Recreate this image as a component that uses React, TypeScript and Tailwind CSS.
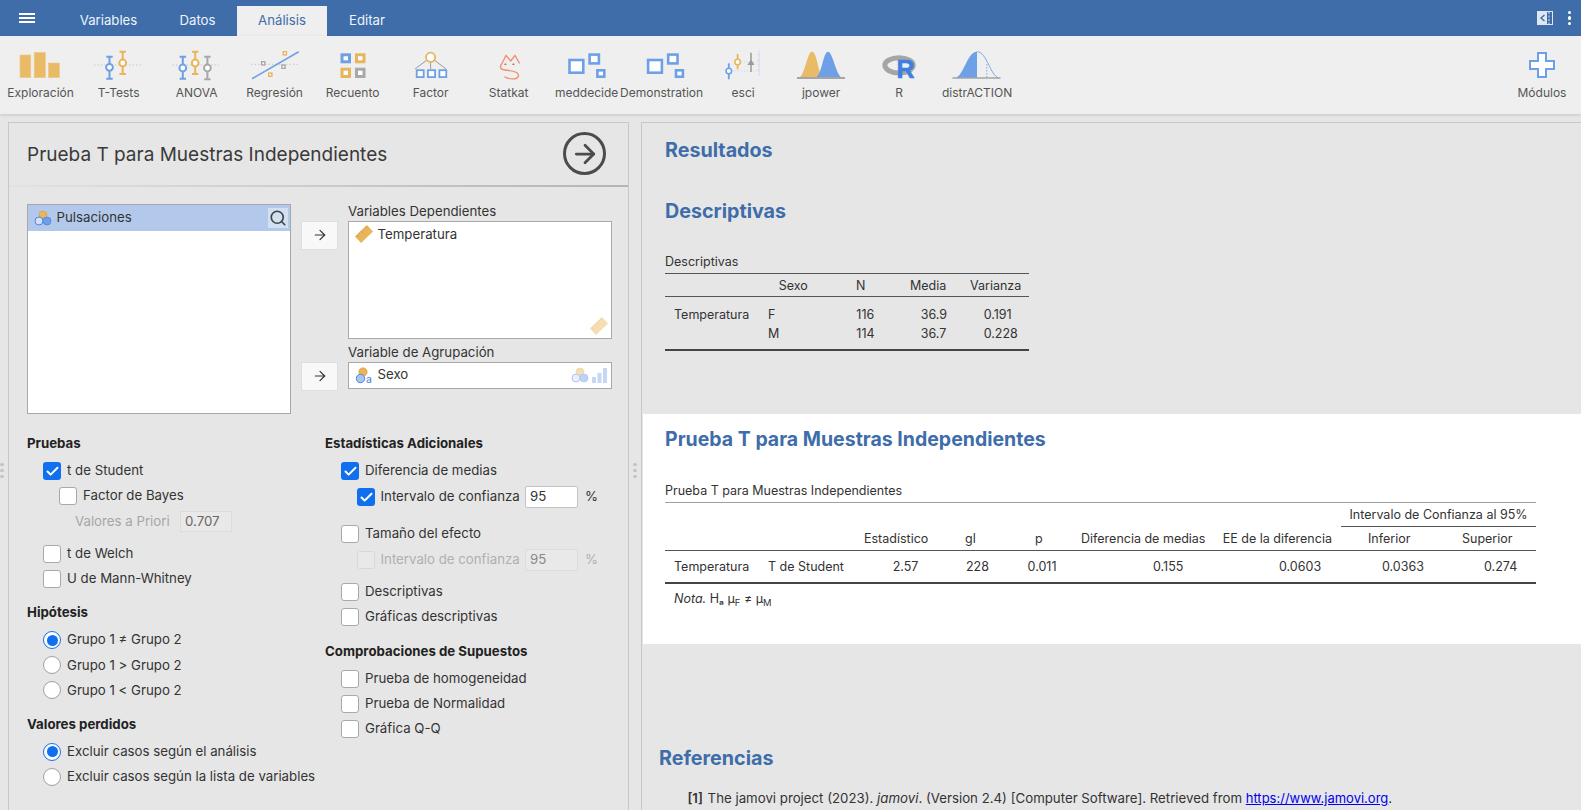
import type { ReactNode } from 'react';
import { ArrowRight, Search, Check } from 'lucide-react';

const BLUE = '#6ea0e8';
const ORANGE = '#e9b45a';
const GRAY = '#a8a8a8';

function ErrBar({ x, y1, y2, cy, color, r = 3.4 }: { x: number; y1: number; y2: number; cy: number; color: string; r?: number }) {
    return (
        <g stroke={color} strokeWidth="2" fill="none">
            <path d={`M${x} ${y1}V${y2}M${x - 3.2} ${y1}h6.4M${x - 3.2} ${y2}h6.4`} />
            <circle cx={x} cy={cy} r={r} fill="#fff" />
        </g>
    );
}

function Box({ x, y, w, h, color, sw = 2.6 }: { x: number; y: number; w: number; h: number; color: string; sw?: number }) {
    return <rect x={x + sw / 2} y={y + sw / 2} width={w - sw} height={h - sw} fill="#fff" stroke={color} strokeWidth={sw} />;
}

function Dotted({ d }: { d: string }) {
    return <path d={d} stroke="#c9c9c9" strokeWidth="1" strokeDasharray="1.5 2" fill="none" />;
}

function BlocksIcon({ dx = 0 }: { dx?: number }) {
    return (
        <>
            <Box x={11.2 + dx} y={11.7} w={16.4} h={15.3} color={BLUE} />
            <Box x={31.3 + dx} y={6.3} w={11.9} h={11.4} color={BLUE} />
            <Box x={39.1 + dx} y={22} w={9.5} h={9} color={BLUE} />
        </>
    );
}

const toolIcons: Record<string, ReactNode> = {
    exploracion: (
        <g fill="#e9bb66" stroke="#efc988" strokeWidth="0.6">
            <rect x="9" y="8" width="10.8" height="22.7" />
            <rect x="23.2" y="5.3" width="11.2" height="25.4" />
            <rect x="37.4" y="16" width="11" height="14.7" />
        </g>
    ),
    ttests: (
        <>
            <Dotted d="M5 18H53" />
            <ErrBar x={20.5} y1={9.7} y2={31.7} cy={20.3} color={BLUE} />
            <ErrBar x={33.7} y1={4.7} y2={27} cy={16} color={ORANGE} />
        </>
    ),
    anova: (
        <>
            <Dotted d="M5.6 18H52" />
            <ErrBar x={15.8} y1={9.7} y2={31.7} cy={21} color={BLUE} />
            <ErrBar x={28.2} y1={4.7} y2={27} cy={16} color={ORANGE} />
            <ErrBar x={40.4} y1={9.7} y2={32.3} cy={21} color={GRAY} />
        </>
    ),
    regresion: (
        <>
            <Dotted d="M6 17.3H54" />
            <path d="M7.1 31.7L53.7 4.7" stroke={BLUE} strokeWidth="1.6" />
            <Box x={16} y={14} w={4.6} h={4.6} color={GRAY} sw={1.4} />
            <Box x={37.5} y={4} w={4.6} h={4.6} color={ORANGE} sw={1.4} />
            <Box x={36.2} y={17.4} w={4.6} h={4.6} color={GRAY} sw={1.4} />
            <Box x={23} y={25.4} w={4.6} h={4.6} color={ORANGE} sw={1.4} />
        </>
    ),
    recuento: (
        <>
            <Box x={17.5} y={6.3} w={10.5} h={10} color={BLUE} sw={3} />
            <Box x={32} y={6.3} w={10.5} h={10} color={ORANGE} sw={3} />
            <Box x={17.5} y={20.7} w={10.5} h={10.3} color={ORANGE} sw={3} />
            <Box x={32} y={20.7} w={10.5} h={10.3} color={GRAY} sw={3} />
        </>
    ),
    factor: (
        <>
            <path d="M29.6 10.3L14 22M29.6 10.3V22M29.6 10.3L45 22" stroke="#9a9a9a" strokeWidth="1" fill="none" />
            <circle cx="29.6" cy="10.3" r="4.6" fill="#fff" stroke={ORANGE} strokeWidth="1.8" />
            <Box x={14.8} y={22.3} w={8.8} h={8.7} color={BLUE} sw={1.8} />
            <Box x={26} y={22.3} w={9} h={8.7} color={BLUE} sw={1.8} />
            <Box x={37.5} y={22.3} w={8.7} h={8.7} color={BLUE} sw={1.8} />
        </>
    ),
    statkat: (
        <g fill="none" stroke="#f28c6b" strokeWidth="1.3" strokeLinecap="round" strokeLinejoin="round">
            <path d="M40.3 16L36 8.3L31.7 14L27 8.3L23 16.5C20 20 21.5 22.5 26 23C30 23.5 34 23.5 37.5 25.5C41 27.5 39.5 31.5 35.5 31.8C32 32 28 31.5 26 30" />
            <path d="M26 17.3h.8M34 17.3h.8" stroke="#d9604f" strokeWidth="1.5" />
        </g>
    ),
    meddecide: <BlocksIcon />,
    demonstration: <BlocksIcon dx={3.6} />,
    esci: (
        <>
            <path d="M46.2 3.7V29M44.8 8h1.4M44.8 13h1.4M44.8 18h1.4M44.8 23h1.4" stroke="#b6cdf0" strokeWidth="0.8" strokeDasharray="1.5 1" fill="none" />
            <path d="M16 24H46M25 15H46" stroke="#c6d8f3" strokeWidth="0.8" strokeDasharray="1.5 1.5" fill="none" />
            <path d="M15.8 16.3V32.3" stroke={BLUE} strokeWidth="1.8" />
            <circle cx="15.8" cy="24" r="2.8" fill="#fff" stroke={BLUE} strokeWidth="1.5" />
            <path d="M24.6 7V22.3" stroke={ORANGE} strokeWidth="1.8" />
            <circle cx="24.6" cy="15" r="2.8" fill="#fff" stroke={ORANGE} strokeWidth="1.5" />
            <path d="M38 5.7V25" stroke={GRAY} strokeWidth="1.8" />
            <path d="M34.4 18L38 12.5L41.6 18Z" fill="#9a9a9a" />
        </>
    ),
    jpower: (
        <>
            <path d="M7 31C14 30 16 4.7 21 4.7C26 4.7 27 26 32 31Z" fill="#e9bb66" />
            <path d="M24 31C31 29 32 4.7 37 4.7C42 4.7 45 30 52 31Z" fill={BLUE} />
            <path d="M6 31H54" stroke="#a5a5a5" strokeWidth="2" />
        </>
    ),
    r: (
        <>
            <ellipse cx="30" cy="18.3" rx="14.2" ry="7.6" fill="none" stroke="#a5a5a5" strokeWidth="5" />
            <text x="27.5" y="31.3" fontSize="25" fontWeight="700" fontFamily="Liberation Sans, sans-serif" fill="#3f7fe0" stroke="#3f7fe0" strokeWidth="0.6">R</text>
        </>
    ),
    distraction: (
        <>
            <path d="M8 31C17 29 20 4.7 30 4.7V31Z" fill={BLUE} />
            <path d="M30 4.7C40 4.7 43 29 52 31" fill="none" stroke={BLUE} strokeWidth="0.9" />
            <path d="M39.8 17V31" stroke={BLUE} strokeWidth="0.9" strokeDasharray="1.5 1.5" />
            <path d="M5.4 31H53.5" stroke="#a5a5a5" strokeWidth="1.6" />
        </>
    ),
};

function ToolItem({ icon, label, className }: { icon: string; label: string; className: string }) {
    return (
        <div className={`flex flex-col items-center ${className}`}>
            <svg width="60" height="36" viewBox="0 0 60 36" className="mt-[11px] shrink-0">{toolIcons[icon]}</svg>
            <span className="mt-[2px] text-[12px] leading-[16px] whitespace-nowrap text-[#555]">{label}</span>
        </div>
    );
}

function NominalIcon({ className = '' }: { className?: string }) {
    return (
        <svg width="18" height="16" viewBox="0 0 18 16" className={className}>
            <circle cx="9" cy="5" r="4" fill={ORANGE} stroke="#d79b3a" strokeWidth="0.6" />
            <circle cx="5" cy="11" r="4" fill="#cfe0fa" stroke="#4f86e0" strokeWidth="1" />
            <circle cx="13" cy="11" r="4" fill={BLUE} stroke="#4f86e0" strokeWidth="0.8" />
        </svg>
    );
}

function RulerIcon({ className = '' }: { className?: string }) {
    return (
        <svg width="18" height="18" viewBox="0 0 18 18" className={className}>
            <path d="M12 0L18 6.5L6 18L0 11.5Z" fill={ORANGE} />
            <path d="M10.4 1.6l1.6 1.7M8.2 3.7l1 1.1M6 5.8l1.6 1.7M3.8 7.9l1 1.1M1.6 10l1.6 1.7" stroke="#b9812a" strokeWidth="0.7" />
        </svg>
    );
}

function NominalTextIcon() {
    return (
        <svg width="18" height="20" viewBox="0 0 18 20" className="-mb-[3px]">
            <circle cx="8" cy="5" r="4.2" fill={ORANGE} stroke="#d79b3a" strokeWidth="0.6" />
            <circle cx="5.5" cy="11.5" r="4.2" fill="#a9c6f2" stroke="#4f86e0" strokeWidth="1" />
            <text x="11" y="16" fontSize="10.5" fontFamily="Inter, sans-serif" fill="#3f7fe0">a</text>
        </svg>
    );
}

function Checkbox({ checked, disabled }: { checked?: boolean; disabled?: boolean }) {
    if (checked) {
        return (
            <span className="flex h-[18px] w-[18px] shrink-0 items-center justify-center rounded-[3px] bg-[#0f6fee]">
                <Check size={15} strokeWidth={3.2} color="#fff" />
            </span>
        );
    }
    return (
        <span className={`h-[18px] w-[18px] shrink-0 rounded-[3px] border ${disabled ? 'border-[#d8d8d8] bg-[#e9e9e9]' : 'border-[#a9a9a9] bg-white'}`} />
    );
}

function Radio({ checked }: { checked?: boolean }) {
    if (checked) {
        return (
            <span className="flex h-[18px] w-[18px] shrink-0 items-center justify-center rounded-full border-[1.5px] border-[#0f6fee] bg-white">
                <span className="h-[11px] w-[11px] rounded-full bg-[#0f6fee]" />
            </span>
        );
    }
    return <span className="h-[18px] w-[18px] shrink-0 rounded-full border border-[#a0a0a0] bg-white" />;
}

function SectionTitle({ children, className }: { children: ReactNode; className: string }) {
    return <div className={`flex h-[18px] items-center font-bold text-[#222] ${className}`}>{children}</div>;
}

function CheckRow({ label, checked, className }: { label: string; checked?: boolean; className: string }) {
    return (
        <div className={`flex h-[18px] items-center gap-[6px] ${className}`}>
            <Checkbox checked={checked} />
            <span>{label}</span>
        </div>
    );
}

function RadioRow({ label, checked, className }: { label: string; checked?: boolean; className: string }) {
    return (
        <div className={`flex h-[18px] items-center gap-[6px] ${className}`}>
            <Radio checked={checked} />
            <span className="whitespace-nowrap">{label}</span>
        </div>
    );
}

function ConfRow({ checked, className }: { checked?: boolean; className: string }) {
    const dim = !checked;
    return (
        <div className={`flex h-[22px] items-center ${className}`}>
            <Checkbox checked={checked} disabled={dim} />
            <span className={`ml-[5.5px] w-[144.5px] whitespace-nowrap ${dim ? 'text-[#b0b0b0]' : ''}`}>Intervalo de confianza</span>
            <span className={`flex h-[22px] w-[52.5px] items-center rounded-[2px] border pl-[4px] ${dim ? 'border-[#dcdcdc] bg-[#e9e9e9] text-[#888]' : 'border-[#c4c4c4] bg-white'}`}>95</span>
            <span className={`ml-[7.5px] ${dim ? 'text-[#b0b0b0]' : ''}`}>%</span>
        </div>
    );
}

function ArrowButton({ className }: { className: string }) {
    return (
        <div className={`flex w-[37px] shrink-0 items-center justify-center border border-[#dedede] bg-[#f8f8f8] ${className}`}>
            <ArrowRight size={16} color="#333" strokeWidth={1.8} />
        </div>
    );
}

function HandleDots() {
    return (
        <div className="mt-[341px] flex flex-col items-center gap-[2.5px]">
            <span className="h-[3.5px] w-[3.5px] rounded-full bg-[#c4c4c4]" />
            <span className="h-[3.5px] w-[3.5px] rounded-full bg-[#c4c4c4]" />
            <span className="h-[3.5px] w-[3.5px] rounded-full bg-[#c4c4c4]" />
        </div>
    );
}

function Heading({ children, className }: { children: ReactNode; className: string }) {
    return <h2 className={`leading-[28px] font-bold text-[#3e6da9] ${className}`}>{children}</h2>;
}

export default function App() {
    return (
        <div className="flex h-[810px] w-[1581px] flex-col overflow-hidden bg-[#e6e6e6] font-[Inter,sans-serif] text-[13.25px] text-[#333]">
            {/* Tabs */}
            <header className="flex h-9 shrink-0 items-end bg-[#3e6da9] text-[13.2px] text-white">
                <div className="flex h-9 w-[59px] items-center pl-[19px]">
                    <svg width="16" height="10" viewBox="0 0 16 10">
                        <path d="M0 1H16M0 5H16M0 9H16" stroke="#fff" strokeWidth="1.8" />
                    </svg>
                </div>
                <div className="flex h-[30.5px] w-[99px] items-center justify-center text-[#f0f4fa]">Variables</div>
                <div className="flex h-[30.5px] w-[79px] items-center justify-center text-[#f0f4fa]">Datos</div>
                <div className="flex h-[30.5px] w-[90px] items-center justify-center bg-[#efefef] text-[#3e6da9]">Análisis</div>
                <div className="flex h-[30.5px] w-[80px] items-center justify-center text-[#f0f4fa]">Editar</div>
                <div className="ml-auto flex h-9 items-center">
                    <svg width="16" height="14" viewBox="0 0 16 14">
                        <rect x="0.5" y="0.5" width="15" height="13" fill="#3e6da9" stroke="#dfe7f2" />
                        <rect x="1" y="1" width="9" height="12" fill="#dfe7f2" />
                        <path d="M7.5 4L4 7L7.5 10" fill="none" stroke="#3e6da9" strokeWidth="1.4" />
                        <path d="M12 1V13" stroke="#dfe7f2" strokeWidth="1" strokeDasharray="2 1.5" />
                    </svg>
                    <div className="ml-[15px] mr-[10px] flex flex-col gap-[2.2px]">
                        <span className="h-[3.4px] w-[3.4px] rounded-full bg-white" />
                        <span className="h-[3.4px] w-[3.4px] rounded-full bg-white" />
                        <span className="h-[3.4px] w-[3.4px] rounded-full bg-white" />
                    </div>
                </div>
            </header>

            {/* Toolbar */}
            <div className="z-10 flex h-[78px] shrink-0 bg-[#efefef] pl-[1.6px] shadow-[0_1px_3px_rgba(0,0,0,0.15)]">
                <ToolItem icon="exploracion" label="Exploración" className="w-[78px]" />
                <ToolItem icon="ttests" label="T-Tests" className="w-[78px]" />
                <ToolItem icon="anova" label="ANOVA" className="w-[78px]" />
                <ToolItem icon="regresion" label="Regresión" className="w-[78px]" />
                <ToolItem icon="recuento" label="Recuento" className="w-[78px]" />
                <ToolItem icon="factor" label="Factor" className="w-[78px]" />
                <ToolItem icon="statkat" label="Statkat" className="w-[78px]" />
                <ToolItem icon="meddecide" label="meddecide" className="w-[78px]" />
                <ToolItem icon="demonstration" label="Demonstration" className="mr-[6.5px] w-[72px]" />
                <ToolItem icon="esci" label="esci" className="w-[78px]" />
                <ToolItem icon="jpower" label="jpower" className="w-[78px]" />
                <ToolItem icon="r" label="R" className="w-[78px]" />
                <ToolItem icon="distraction" label="distrACTION" className="w-[78px]" />
                <div className="ml-auto mr-[9px] flex w-[60px] flex-col items-center">
                    <svg width="26" height="26" viewBox="0 0 26 26" className="mt-[16px] shrink-0">
                        <path d="M9 1H17V9H25V17H17V25H9V17H1V9H9Z" fill="#fff" stroke={BLUE} strokeWidth="2" />
                    </svg>
                    <span className="mt-[7px] text-[12px] leading-[16px] text-[#555]">Módulos</span>
                </div>
            </div>

            {/* Main */}
            <main className="flex min-h-0 flex-1 pt-[7.5px]">
                <div className="w-[8px] shrink-0">
                    <div className="w-[4px]">
                        <HandleDots />
                    </div>
                </div>

                {/* Options panel */}
                <section className="w-[621px] shrink-0 border-x border-t border-[#c8c8c8]">
                    <div className="flex h-[62px] items-center justify-between pl-[18px] pr-[22px]">
                        <h1 className="mt-[2px] text-[19px] leading-[28px] font-normal text-[#3a3a3a]">Prueba T para Muestras Independientes</h1>
                        <div className="flex h-[43px] w-[43px] items-center justify-center rounded-full border-[3px] border-[#4b4b4b]">
                            <ArrowRight size={30} color="#4b4b4b" strokeWidth={2.2} />
                        </div>
                    </div>
                    <div className="h-[2px] bg-linear-to-r from-[#e2e2e2] to-[#b4b4b4]" />

                    <div className="flex pl-[18px] pt-[17px]">
                        <div className="h-[210px] w-[263.5px] shrink-0 border border-[#a8a8a8] bg-white">
                            <div className="flex h-[26px] items-center justify-between bg-[#b3c9ec] pl-[6px] pr-[2px]">
                                <div className="flex items-center gap-[4.5px]">
                                    <NominalIcon />
                                    <span>Pulsaciones</span>
                                </div>
                                <div className="flex h-[20px] w-[20px] items-center justify-center bg-[#d3dff3]">
                                    <Search size={18} color="#444" strokeWidth={2.2} />
                                </div>
                            </div>
                        </div>
                        <div className="ml-[10.5px] flex flex-col">
                            <div className="flex gap-[10px]">
                                <ArrowButton className="mt-[17px] h-[29px]" />
                                <div>
                                    <div className="h-[17px] leading-[15px]">Variables Dependientes</div>
                                    <div className="flex h-[118.5px] w-[263.5px] flex-col justify-between border border-[#a8a8a8] bg-white p-[3px] pl-[6px]">
                                        <div className="flex items-center gap-[4.5px]">
                                            <RulerIcon />
                                            <span>Temperatura</span>
                                        </div>
                                        <RulerIcon className="self-end opacity-45" />
                                    </div>
                                </div>
                            </div>
                            <div className="mt-[3.5px] flex gap-[10px]">
                                <ArrowButton className="mt-[19px] h-[29px]" />
                                <div>
                                    <div className="h-[19px] leading-[18px]">Variable de Agrupación</div>
                                    <div className="flex h-[27.5px] w-[263.5px] items-center justify-between border border-[#a8a8a8] bg-white pl-[6px] pr-[4px]">
                                        <div className="flex items-center gap-[4.5px]">
                                            <NominalTextIcon />
                                            <span>Sexo</span>
                                        </div>
                                        <div className="flex items-center gap-[3px]">
                                            <NominalIcon className="opacity-45" />
                                            <svg width="15" height="16" viewBox="0 0 15 16" className="opacity-40">
                                                <path d="M0 10h4v6H0zM5.5 6h4v10h-4zM11 1h4v15h-4z" fill={BLUE} />
                                            </svg>
                                        </div>
                                    </div>
                                </div>
                            </div>
                        </div>
                    </div>

                    <div className="mt-[21.2px] flex pl-[18px]">
                        <div className="w-[298px] shrink-0">
                            <SectionTitle className="">Pruebas</SectionTitle>
                            <CheckRow label="t de Student" checked className="ml-[16px] mt-[9.6px]" />
                            <CheckRow label="Factor de Bayes" className="ml-[32px] mt-[6.4px]" />
                            <div className="ml-[48px] mt-[6.3px] flex h-[21.5px] items-center">
                                <span className="w-[105px] text-[#a6a6a6]">Valores a Priori</span>
                                <span className="flex h-[21.5px] w-[51.5px] items-center border border-[#dcdcdc] bg-[#e9e9e9] pl-[4px] text-[#666]">0.707</span>
                            </div>
                            <CheckRow label="t de Welch" className="ml-[16px] mt-[12.4px]" />
                            <CheckRow label="U de Mann-Whitney" className="ml-[16px] mt-[7px]" />
                            <SectionTitle className="mt-[16px]">Hipótesis</SectionTitle>
                            <RadioRow label="Grupo 1 ≠ Grupo 2" checked className="ml-[16px] mt-[9.3px]" />
                            <RadioRow label="Grupo 1 > Grupo 2" className="ml-[16px] mt-[7.3px]" />
                            <RadioRow label="Grupo 1 < Grupo 2" className="ml-[16px] mt-[7px]" />
                            <SectionTitle className="mt-[16px]">Valores perdidos</SectionTitle>
                            <RadioRow label="Excluir casos según el análisis" checked className="ml-[16px] mt-[9.4px]" />
                            <RadioRow label="Excluir casos según la lista de variables" className="ml-[16px] mt-[7.3px]" />
                        </div>
                        <div className="flex-1">
                            <SectionTitle className="">Estadísticas Adicionales</SectionTitle>
                            <CheckRow label="Diferencia de medias" checked className="ml-[16px] mt-[9.6px]" />
                            <ConfRow checked className="ml-[32px] mt-[6px]" />
                            <CheckRow label="Tamaño del efecto" className="ml-[16px] mt-[16.7px]" />
                            <ConfRow className="ml-[32px] mt-[6px]" />
                            <CheckRow label="Descriptivas" className="ml-[16px] mt-[12.3px]" />
                            <CheckRow label="Gráficas descriptivas" className="ml-[16px] mt-[7px]" />
                            <SectionTitle className="mt-[16.4px]">Comprobaciones de Supuestos</SectionTitle>
                            <CheckRow label="Prueba de homogeneidad" className="ml-[16px] mt-[9px]" />
                            <CheckRow label="Prueba de Normalidad" className="ml-[16px] mt-[7.3px]" />
                            <CheckRow label="Gráfica Q-Q" className="ml-[16px] mt-[7.3px]" />
                        </div>
                    </div>
                </section>

                <div className="w-[12px] shrink-0">
                    <div className="ml-[4px] w-[4px]">
                        <HandleDots />
                    </div>
                </div>

                {/* Results panel */}
                <section className="min-w-0 flex-1 border-l border-t border-[#c8c8c8] text-[12.5px] leading-[16px]">
                    <div className="h-[291px] pl-[23px] pt-[13px]">
                        <Heading className="text-[19.7px]">Resultados</Heading>
                        <Heading className="mt-[33.4px] text-[19.7px]">Descriptivas</Heading>
                        <div className="mt-[29px] w-[364px]">
                            <div className="pb-[3.5px]">Descriptivas</div>
                            <div className="grid h-[24px] grid-cols-[103px_50px_60px_70px_81px] items-center border-y border-[#555] pt-[1px]">
                                <span />
                                <span className="pl-[10.7px]">Sexo</span>
                                <span className="pl-[38px]">N</span>
                                <span className="pl-[32px]">Media</span>
                                <span className="pl-[22px]">Varianza</span>
                            </div>
                            <div className="flex h-[54px] flex-col justify-center border-b-2 border-[#444] pt-[1.5px]">
                                <div className="grid h-[19px] grid-cols-[103px_50px_60px_70px_81px] items-center">
                                    <span className="pl-[9px]">Temperatura</span>
                                    <span>F</span>
                                    <span className="pl-[38.3px]">116</span>
                                    <span className="pl-[42.7px]">36.9</span>
                                    <span className="pl-[35.7px]">0.191</span>
                                </div>
                                <div className="grid h-[19px] grid-cols-[103px_50px_60px_70px_81px] items-center">
                                    <span />
                                    <span>M</span>
                                    <span className="pl-[38.3px]">114</span>
                                    <span className="pl-[42.7px]">36.7</span>
                                    <span className="pl-[35.7px]">0.228</span>
                                </div>
                            </div>
                        </div>
                    </div>

                    <div className="ml-[1px] h-[230.3px] bg-white pl-[22px] pt-[11.6px]">
                        <Heading className="text-[19.5px]">Prueba T para Muestras Independientes</Heading>
                        <div className="mt-[29.7px] w-[870.5px]">
                            <div className="pb-[3px]">Prueba T para Muestras Independientes</div>
                            <div className="h-[25.5px] border-t border-[#a0a0a0]">
                                <div className="ml-[676px] flex h-[24.5px] items-center border-b border-[#555] pl-[8.5px]">Intervalo de Confianza al 95%</div>
                            </div>
                            <div className="grid h-[24px] grid-cols-[103px_96px_96px_60px_55px_140px_126px_109px_85.5px] items-center border-b border-[#555]">
                                <span />
                                <span />
                                <span>Estadístico</span>
                                <span className="pl-[5px]">gl</span>
                                <span className="pl-[15px]">p</span>
                                <span className="pl-[6px]">Diferencia de medias</span>
                                <span className="pl-[7.8px]">EE de la diferencia</span>
                                <span className="pl-[27px]">Inferior</span>
                                <span className="pl-[12px]">Superior</span>
                            </div>
                            <div className="grid h-[33px] grid-cols-[103px_96px_96px_60px_55px_140px_126px_109px_85.5px] items-center border-b-2 border-[#444]">
                                <span className="pl-[9px]">Temperatura</span>
                                <span>T de Student</span>
                                <span className="pl-[28.7px]">2.57</span>
                                <span className="pl-[6px]">228</span>
                                <span className="pl-[7.6px]">0.011</span>
                                <span className="pl-[78px]">0.155</span>
                                <span className="pl-[64px]">0.0603</span>
                                <span className="pl-[41px]">0.0363</span>
                                <span className="pl-[34px]">0.274</span>
                            </div>
                            <div className="mt-[7px] pl-[9px]">
                                <i>Nota.</i> Hₐ μ<sub>F</sub> ≠ μ<sub>M</sub>
                            </div>
                        </div>
                    </div>

                    <div className="pl-[17px]">
                        <Heading className="mt-[100px] text-[19.7px]">Referencias</Heading>
                        <p className="mt-[18px] whitespace-nowrap pl-[28.4px] text-[13.25px]">
                            <b className="mr-[1px] font-semibold">[1]</b> The jamovi project (2023). <i>jamovi</i>. (Version 2.4) [Computer Software]. Retrieved from{' '}
                            <a href="#" className="text-[13px] text-[#0000ee] underline">https://www.jamovi.org</a>.
                        </p>
                    </div>
                </section>
            </main>
        </div>
    );
}
